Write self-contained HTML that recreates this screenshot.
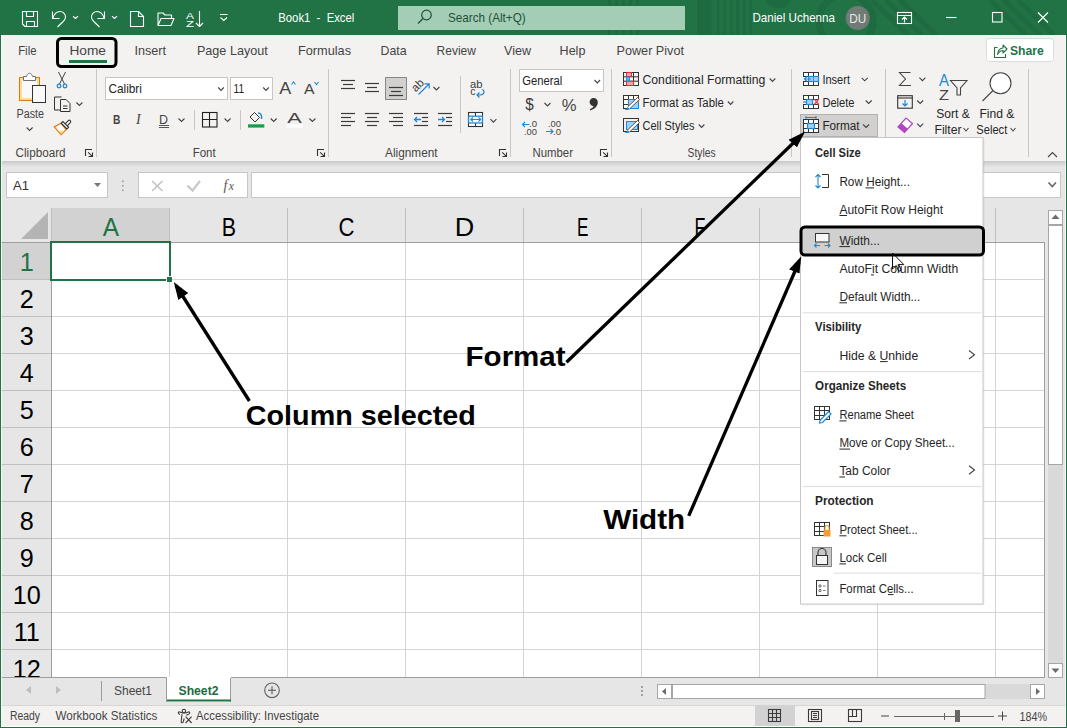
<!DOCTYPE html>
<html><head><meta charset="utf-8"><style>
html,body{margin:0;padding:0;width:1067px;height:728px;overflow:hidden;background:#f3f2f1}
svg{display:block;font-family:"Liberation Sans", sans-serif}
</style></head><body>
<svg width="1067" height="728" viewBox="0 0 1067 728">
<rect x="0" y="0" width="1067" height="728" fill="#f3f2f1"/>
<rect x="0" y="0" width="1067" height="35" fill="#217346"/>
<rect x="0" y="161" width="1067" height="47" fill="#e6e6e6"/>
<defs><linearGradient id="sh" x1="0" y1="0" x2="0" y2="1"><stop offset="0" stop-color="#c9c9c9"/><stop offset="1" stop-color="#e6e6e6"/></linearGradient></defs>
<rect x="0" y="161" width="1067" height="6" fill="url(#sh)"/>
<rect x="0" y="208" width="1067" height="469" fill="#e6e6e6"/>
<rect x="52" y="243" width="992" height="434" fill="#ffffff"/>
<rect x="169" y="208" width="1" height="34" fill="#bfbfbf"/>
<rect x="169" y="243" width="1" height="434" fill="#d4d4d4"/>
<rect x="287" y="208" width="1" height="34" fill="#bfbfbf"/>
<rect x="287" y="243" width="1" height="434" fill="#d4d4d4"/>
<rect x="405" y="208" width="1" height="34" fill="#bfbfbf"/>
<rect x="405" y="243" width="1" height="434" fill="#d4d4d4"/>
<rect x="523" y="208" width="1" height="34" fill="#bfbfbf"/>
<rect x="523" y="243" width="1" height="434" fill="#d4d4d4"/>
<rect x="641" y="208" width="1" height="34" fill="#bfbfbf"/>
<rect x="641" y="243" width="1" height="434" fill="#d4d4d4"/>
<rect x="759" y="208" width="1" height="34" fill="#bfbfbf"/>
<rect x="759" y="243" width="1" height="434" fill="#d4d4d4"/>
<rect x="877" y="208" width="1" height="34" fill="#bfbfbf"/>
<rect x="877" y="243" width="1" height="434" fill="#d4d4d4"/>
<rect x="995" y="208" width="1" height="34" fill="#bfbfbf"/>
<rect x="995" y="243" width="1" height="434" fill="#d4d4d4"/>
<rect x="0" y="279" width="51" height="1" fill="#bfbfbf"/>
<rect x="52" y="279" width="992" height="1" fill="#d4d4d4"/>
<rect x="0" y="316" width="51" height="1" fill="#bfbfbf"/>
<rect x="52" y="316" width="992" height="1" fill="#d4d4d4"/>
<rect x="0" y="353" width="51" height="1" fill="#bfbfbf"/>
<rect x="52" y="353" width="992" height="1" fill="#d4d4d4"/>
<rect x="0" y="390" width="51" height="1" fill="#bfbfbf"/>
<rect x="52" y="390" width="992" height="1" fill="#d4d4d4"/>
<rect x="0" y="427" width="51" height="1" fill="#bfbfbf"/>
<rect x="52" y="427" width="992" height="1" fill="#d4d4d4"/>
<rect x="0" y="464" width="51" height="1" fill="#bfbfbf"/>
<rect x="52" y="464" width="992" height="1" fill="#d4d4d4"/>
<rect x="0" y="501" width="51" height="1" fill="#bfbfbf"/>
<rect x="52" y="501" width="992" height="1" fill="#d4d4d4"/>
<rect x="0" y="538" width="51" height="1" fill="#bfbfbf"/>
<rect x="52" y="538" width="992" height="1" fill="#d4d4d4"/>
<rect x="0" y="575" width="51" height="1" fill="#bfbfbf"/>
<rect x="52" y="575" width="992" height="1" fill="#d4d4d4"/>
<rect x="0" y="612" width="51" height="1" fill="#bfbfbf"/>
<rect x="52" y="612" width="992" height="1" fill="#d4d4d4"/>
<rect x="0" y="649" width="51" height="1" fill="#bfbfbf"/>
<rect x="52" y="649" width="992" height="1" fill="#d4d4d4"/>
<rect x="52" y="208" width="117" height="34" fill="#d2d2d2"/>
<rect x="1" y="243" width="50" height="36" fill="#d2d2d2"/>
<rect x="0" y="242" width="1044" height="1" fill="#9e9e9e"/>
<rect x="51" y="208" width="1" height="34" fill="#c0c0c0"/>
<rect x="51" y="243" width="1" height="434" fill="#9e9e9e"/>
<rect x="1044" y="242" width="1" height="435" fill="#9e9e9e"/>
<polygon points="48,212 48,239 21,239" fill="#b4b4b4"/>
<text x="111" y="236.2" font-size="25.6" fill="#217346" font-weight="normal" text-anchor="middle" textLength="16.3" lengthAdjust="spacingAndGlyphs" >A</text>
<text x="229" y="236.2" font-size="25.6" fill="#000" font-weight="normal" text-anchor="middle" textLength="14.3" lengthAdjust="spacingAndGlyphs" >B</text>
<text x="346.5" y="236.2" font-size="25.6" fill="#000" font-weight="normal" text-anchor="middle" textLength="16" lengthAdjust="spacingAndGlyphs" >C</text>
<text x="464.5" y="236.2" font-size="25.6" fill="#000" font-weight="normal" text-anchor="middle" textLength="19.5" lengthAdjust="spacingAndGlyphs" >D</text>
<text x="582.6" y="236.2" font-size="25.6" fill="#000" font-weight="normal" text-anchor="middle" textLength="11.4" lengthAdjust="spacingAndGlyphs" >E</text>
<text x="700" y="236.2" font-size="25.6" fill="#000" font-weight="normal" text-anchor="middle" textLength="10.9" lengthAdjust="spacingAndGlyphs" >F</text>
<text x="818" y="236.2" font-size="25.6" fill="#000" font-weight="normal" text-anchor="middle" textLength="17" lengthAdjust="spacingAndGlyphs" >G</text>
<text x="936" y="236.2" font-size="25.6" fill="#000" font-weight="normal" text-anchor="middle" textLength="17" lengthAdjust="spacingAndGlyphs" >H</text>
<text x="26.8" y="271.3" font-size="25.2" fill="#217346" font-weight="normal" text-anchor="middle" >1</text>
<text x="26.8" y="308.3" font-size="25.2" fill="#000" font-weight="normal" text-anchor="middle" >2</text>
<text x="26.8" y="345.3" font-size="25.2" fill="#000" font-weight="normal" text-anchor="middle" >3</text>
<text x="26.8" y="382.3" font-size="25.2" fill="#000" font-weight="normal" text-anchor="middle" >4</text>
<text x="26.8" y="419.3" font-size="25.2" fill="#000" font-weight="normal" text-anchor="middle" >5</text>
<text x="26.8" y="456.3" font-size="25.2" fill="#000" font-weight="normal" text-anchor="middle" >6</text>
<text x="26.8" y="493.3" font-size="25.2" fill="#000" font-weight="normal" text-anchor="middle" >7</text>
<text x="26.8" y="530.3" font-size="25.2" fill="#000" font-weight="normal" text-anchor="middle" >8</text>
<text x="26.8" y="567.3" font-size="25.2" fill="#000" font-weight="normal" text-anchor="middle" >9</text>
<text x="26.8" y="604.3" font-size="25.2" fill="#000" font-weight="normal" text-anchor="middle" >10</text>
<text x="26.8" y="641.3" font-size="25.2" fill="#000" font-weight="normal" text-anchor="middle" >11</text>
<text x="26.8" y="678.3" font-size="25.2" fill="#000" font-weight="normal" text-anchor="middle" >12</text>
<path d="M51,276 V242 H170 V276 M166,280 H51 V276" fill="none" stroke="#217346" stroke-width="2"/>
<rect x="167" y="277" width="5" height="5" fill="#217346"/>
<rect x="0" y="677" width="1067" height="28" fill="#e6e6e6"/>
<rect x="0" y="677" width="1045" height="1" fill="#9e9e9e"/>
<rect x="0" y="705" width="1067" height="23" fill="#f3f2f1"/>
<line x1="0" y1="705.5" x2="1067" y2="705.5" stroke="#d6d6d6"/>
<polygon points="26,690 31,686 31,694" fill="#bdbdbd"/>
<polygon points="61,690 56,686 56,694" fill="#bdbdbd"/>
<line x1="101.5" y1="681" x2="101.5" y2="701" stroke="#9b9b9b"/>
<text x="114" y="694.8" font-size="13" fill="#444" font-weight="normal" text-anchor="start" textLength="38" lengthAdjust="spacingAndGlyphs" >Sheet1</text>
<rect x="167" y="677" width="64" height="25" fill="#fff"/>
<line x1="166.5" y1="678" x2="166.5" y2="702" stroke="#9b9b9b"/>
<line x1="230.5" y1="678" x2="230.5" y2="702" stroke="#9b9b9b"/>
<rect x="167" y="699.5" width="64" height="2" fill="#217346"/>
<text x="178.5" y="694.8" font-size="13" fill="#1d6b40" font-weight="bold" text-anchor="start" textLength="40" lengthAdjust="spacingAndGlyphs" >Sheet2</text>
<circle cx="272" cy="690.3" r="7.3" fill="none" stroke="#666" stroke-width="1.2"/>
<line x1="268" y1="690.3" x2="276" y2="690.3" stroke="#666" stroke-width="1.2"/>
<line x1="272" y1="686.3" x2="272" y2="694.3" stroke="#666" stroke-width="1.2"/>
<rect x="641" y="686" width="2" height="2" fill="#a0a0a0"/>
<rect x="641" y="690" width="2" height="2" fill="#a0a0a0"/>
<rect x="641" y="694" width="2" height="2" fill="#a0a0a0"/>
<rect x="657" y="684" width="388" height="15" fill="#d9d9d9"/>
<rect x="657.5" y="684.5" width="14" height="14" fill="#fff" stroke="#a6a6a6"/>
<rect x="672" y="684" width="1" height="15" fill="#b0b0b0"/>
<rect x="672.5" y="684.5" width="312.5" height="14" fill="#fff" stroke="#a6a6a6"/>
<rect x="1030.5" y="684.5" width="14" height="14" fill="#fff" stroke="#a6a6a6"/>
<polygon points="662,691.5 666,688 666,695" fill="#6b6b6b"/>
<polygon points="1040,691.5 1036,688 1036,695" fill="#6b6b6b"/>
<rect x="1045" y="208" width="21" height="469" fill="#e6e6e6"/>
<rect x="1048" y="225" width="15" height="438" fill="#d9d9d9"/>
<rect x="1048.5" y="210.5" width="14" height="14" fill="#fff" stroke="#a6a6a6"/>
<rect x="1048.5" y="225.5" width="14" height="239" fill="#fff" stroke="#a6a6a6"/>
<rect x="1048.5" y="663.5" width="14" height="14" fill="#fff" stroke="#a6a6a6"/>
<polygon points="1055.5,214.5 1051.5,219 1059.5,219" fill="#6b6b6b"/>
<polygon points="1055.5,673 1051.5,668.5 1059.5,668.5" fill="#6b6b6b"/>
<text x="10" y="720" font-size="12" fill="#444" font-weight="normal" text-anchor="start" textLength="30" lengthAdjust="spacingAndGlyphs" >Ready</text>
<text x="55.4" y="720" font-size="12" fill="#444" font-weight="normal" text-anchor="start" textLength="102" lengthAdjust="spacingAndGlyphs" >Workbook Statistics</text>
<text x="196" y="720" font-size="12" fill="#444" font-weight="normal" text-anchor="start" textLength="123" lengthAdjust="spacingAndGlyphs" >Accessibility: Investigate</text>
<g stroke="#3b3b3b" stroke-width="1.1" fill="none" stroke-linejoin="round"><circle cx="183.9" cy="711" r="1.7"/><path d="M180,714.5 C177.5,713.5 178,711.5 179.8,712 L182.5,713 H185.5 L188.3,712 C190,711.5 190.5,713.5 188,714.5 L186.3,715.3 M182,714.3 L181.2,721.3 C181,723 183.2,723.2 183.4,721.5 L184.2,718.5"/><path d="M185.6,716.6 L191.6,723 M191.6,716.6 L185.6,723"/></g>
<rect x="755" y="705" width="40" height="21" fill="#d2d2d2"/>
<g stroke="#3b3b3b" stroke-width="1.1" fill="none"><rect x="768.5" y="709.5" width="12" height="12"/><path d="M772.5,709.5 V721.5 M776.5,709.5 V721.5 M768.5,713.5 H780.5 M768.5,717.5 H780.5"/></g>
<g stroke="#3b3b3b" stroke-width="1.1" fill="none"><rect x="808.5" y="709.5" width="13" height="12"/><rect x="811.5" y="711.5" width="7" height="8"/><path d="M813,713.5 H817 M813,715.5 H817 M813,717.5 H817"/></g>
<g stroke="#3b3b3b" stroke-width="1.1" fill="none"><rect x="848.5" y="709.5" width="13" height="12"/><path d="M852.5,709.5 V716.5 H848.5 M856.5,709.5 V716.5 H852.5"/></g>
<line x1="881" y1="716" x2="889" y2="716" stroke="#444"/>
<line x1="894" y1="716.5" x2="994" y2="716.5" stroke="#666"/>
<line x1="944.5" y1="713" x2="944.5" y2="720" stroke="#666"/>
<rect x="955" y="710" width="5" height="12" fill="#666"/>
<line x1="998" y1="716" x2="1007" y2="716" stroke="#444"/><line x1="1002.5" y1="711.5" x2="1002.5" y2="720.5" stroke="#444"/>
<text x="1019.4" y="720.5" font-size="12" fill="#444" font-weight="normal" text-anchor="start" textLength="27.6" lengthAdjust="spacingAndGlyphs" >184%</text>
<g stroke="#fff" stroke-width="1.1" fill="none" stroke-linejoin="round">
<path d="M22.5,11.5 H37.5 V26.5 H25 L22.5,24 Z"/>
<path d="M26.5,11.5 V16.5 H33.5 V11.5"/>
<path d="M26.5,26.5 V21.5 H34.5 V26.5"/>
<path d="M52.5,11.5 V18.5 H59.5"/>
<path d="M52.8,18.3 C54.5,13 58,11.5 60,11.5 C63,11.5 65.5,14 65.5,17 C65.5,19.5 64,21 57.5,27"/>
<path d="M73,16.2 L75.5,18.5 L78,16.2"/>
<path d="M104.5,11.5 V18.5 H97.5"/>
<path d="M104.2,18.3 C102.5,13 99,11.5 97,11.5 C94,11.5 91.5,14 91.5,17 C91.5,19.5 93,21 99.5,27"/>
<path d="M112,16.2 L114.5,18.5 L117,16.2"/>
<path d="M130.5,11.5 H138.5 L143.5,16.5 V26.5 H130.5 Z M138.5,11.5 V16.5 H143.5"/>
<path d="M158,25.5 V13 H163 L165,15 H171.5 V18 M158,25.5 L161,18.5 H174 L171,25.5 Z"/>
<path d="M199.5,11 V26.5 M196,23 L199.5,26.5 L203,23"/>
</g>
<text x="186" y="18.5" font-size="9" fill="#fff" font-weight="normal" text-anchor="start" textLength="8" lengthAdjust="spacingAndGlyphs" >A</text>
<text x="186" y="27" font-size="9" fill="#fff" font-weight="normal" text-anchor="start" textLength="8" lengthAdjust="spacingAndGlyphs" >Z</text>
<g stroke="#fff" stroke-width="1.1" fill="none"><path d="M220,14.5 H227.5 M220.5,17.5 L223.8,20.5 L227,17.5"/></g>
<text x="278.3" y="22.3" font-size="13" fill="#fff" font-weight="normal" text-anchor="start" textLength="76" lengthAdjust="spacingAndGlyphs" >Book1&#160;&#160;-&#160;&#160;Excel</text>
<defs><clipPath id="tb"><rect x="0" y="0" width="1067" height="35"/></clipPath></defs>
<g clip-path="url(#tb)" fill="#1f6b41">
<rect x="608" y="0" width="3" height="35"/>
<rect x="615" y="0" width="3" height="35"/>
<rect x="622" y="0" width="3" height="35"/>
<rect x="629" y="0" width="3" height="35"/>
<rect x="636" y="0" width="3" height="35"/>
<rect x="697" y="0" width="14.5" height="35"/>
<rect x="717" y="0" width="2.5" height="35"/>
<rect x="723.5" y="0" width="2.5" height="35"/>
<rect x="730" y="0" width="2.5" height="35"/>
<rect x="736.5" y="0" width="2.5" height="35"/>
<rect x="743" y="0" width="2.5" height="35"/>
<rect x="749.5" y="0" width="2.5" height="35"/>
<circle cx="778.5" cy="-6" r="14"/>
<circle cx="846" cy="21" r="27" fill="none" stroke="#1f6b41" stroke-width="7"/>
<path d="M872,0 L908,35 M886,0 L922,35 M900,0 L936,35 M990,0 L1026,35 M1004,0 L1040,35 M1018,0 L1054,35" stroke="#1f6b41" stroke-width="5" fill="none"/>
</g>
<rect x="398" y="6" width="287" height="24" fill="#a3cdb5"/>
<g stroke="#1e5136" stroke-width="1.2" fill="none"><circle cx="426.5" cy="15" r="4.8"/><line x1="423" y1="18.5" x2="418" y2="23.5"/></g>
<text x="448" y="22.3" font-size="13" fill="#1e5136" font-weight="normal" text-anchor="start" textLength="77.7" lengthAdjust="spacingAndGlyphs" >Search (Alt+Q)</text>
<text x="752.5" y="22.3" font-size="13" fill="#fff" font-weight="normal" text-anchor="start" textLength="82.4" lengthAdjust="spacingAndGlyphs" >Daniel Uchenna</text>
<circle cx="857.7" cy="18" r="12" fill="#6f7b74"/>
<text x="857.7" y="22.5" font-size="12" fill="#e8e8e8" font-weight="normal" text-anchor="middle" textLength="17" lengthAdjust="spacingAndGlyphs" >DU</text>
<g stroke="#fff" stroke-width="1.1" fill="none"><rect x="897.5" y="12.5" width="14" height="11"/><path d="M897.5,15.5 H911.5 M904.5,22.5 V17 M902,19.5 L904.5,17 L907,19.5"/></g>
<line x1="946" y1="17.5" x2="956.5" y2="17.5" stroke="#fff" stroke-width="1.1"/>
<rect x="992.5" y="12.5" width="9.5" height="9.5" fill="none" stroke="#fff" stroke-width="1.1"/>
<path d="M1038,12.5 L1048,22.5 M1048,12.5 L1038,22.5" stroke="#fff" stroke-width="1.1"/>
<text x="18.2" y="55" font-size="13" fill="#444444" font-weight="normal" text-anchor="start" textLength="18.3" lengthAdjust="spacingAndGlyphs" >File</text>
<text x="69.4" y="55" font-size="13" fill="#444444" font-weight="normal" text-anchor="start" textLength="36.6" lengthAdjust="spacingAndGlyphs" >Home</text>
<rect x="69" y="60" width="38" height="3" fill="#217346"/>
<text x="134.4" y="55" font-size="13" fill="#444444" font-weight="normal" text-anchor="start" textLength="31.5" lengthAdjust="spacingAndGlyphs" >Insert</text>
<text x="196.9" y="55" font-size="13" fill="#444444" font-weight="normal" text-anchor="start" textLength="70.9" lengthAdjust="spacingAndGlyphs" >Page Layout</text>
<text x="298" y="55" font-size="13" fill="#444444" font-weight="normal" text-anchor="start" textLength="53" lengthAdjust="spacingAndGlyphs" >Formulas</text>
<text x="380.5" y="55" font-size="13" fill="#444444" font-weight="normal" text-anchor="start" textLength="26.1" lengthAdjust="spacingAndGlyphs" >Data</text>
<text x="436.6" y="55" font-size="13" fill="#444444" font-weight="normal" text-anchor="start" textLength="39.3" lengthAdjust="spacingAndGlyphs" >Review</text>
<text x="504" y="55" font-size="13" fill="#444444" font-weight="normal" text-anchor="start" textLength="27" lengthAdjust="spacingAndGlyphs" >View</text>
<text x="559.6" y="55" font-size="13" fill="#444444" font-weight="normal" text-anchor="start" textLength="25.8" lengthAdjust="spacingAndGlyphs" >Help</text>
<text x="616.5" y="55" font-size="13" fill="#444444" font-weight="normal" text-anchor="start" textLength="67.5" lengthAdjust="spacingAndGlyphs" >Power Pivot</text>
<rect x="57.5" y="38.5" width="58.5" height="28" rx="4" fill="none" stroke="#000" stroke-width="3"/>
<rect x="986.5" y="38.5" width="67" height="23" rx="3" fill="#fff" stroke="#dcdcdc"/>
<g stroke="#217346" stroke-width="1.1" fill="none" stroke-linejoin="round"><path d="M997.5,47.5 H994.5 V57.5 H1005.5 V54"/><path d="M997.5,54.5 C998,50 1000.5,48 1003,48 V45 L1007,49 L1003,53 V50.5 C1001,50.5 999,51.5 997.5,54.5 Z"/></g>
<text x="1010" y="54.8" font-size="13" fill="#217346" font-weight="bold" text-anchor="start" textLength="33.8" lengthAdjust="spacingAndGlyphs" >Share</text>
<line x1="96.5" y1="69" x2="96.5" y2="157" stroke="#c8c6c4"/>
<line x1="328.5" y1="69" x2="328.5" y2="157" stroke="#c8c6c4"/>
<line x1="510.5" y1="69" x2="510.5" y2="157" stroke="#c8c6c4"/>
<line x1="611.5" y1="69" x2="611.5" y2="157" stroke="#c8c6c4"/>
<line x1="791.5" y1="69" x2="791.5" y2="157" stroke="#c8c6c4"/>
<line x1="885.5" y1="69" x2="885.5" y2="157" stroke="#c8c6c4"/>
<line x1="1028.5" y1="69" x2="1028.5" y2="157" stroke="#c8c6c4"/>
<text x="15.6" y="156.8" font-size="12" fill="#444444" font-weight="normal" text-anchor="start" textLength="50" lengthAdjust="spacingAndGlyphs" >Clipboard</text>
<text x="192.7" y="156.8" font-size="12" fill="#444444" font-weight="normal" text-anchor="start" textLength="23" lengthAdjust="spacingAndGlyphs" >Font</text>
<text x="385.1" y="156.8" font-size="12" fill="#444444" font-weight="normal" text-anchor="start" textLength="52.5" lengthAdjust="spacingAndGlyphs" >Alignment</text>
<text x="532.5" y="156.8" font-size="12" fill="#444444" font-weight="normal" text-anchor="start" textLength="40.5" lengthAdjust="spacingAndGlyphs" >Number</text>
<text x="687.6" y="156.8" font-size="12" fill="#444444" font-weight="normal" text-anchor="start" textLength="28" lengthAdjust="spacingAndGlyphs" >Styles</text>
<g stroke="#333" stroke-width="1.1" fill="none"><path d="M85.5,156 V149.5 H92"/><path d="M88.2,152.4 L92.3,156.3 M88.5,156.5 H92.5 V152.5"/></g>
<g stroke="#333" stroke-width="1.1" fill="none"><path d="M317.5,156 V149.5 H324"/><path d="M320.2,152.4 L324.3,156.3 M320.5,156.5 H324.5 V152.5"/></g>
<g stroke="#333" stroke-width="1.1" fill="none"><path d="M499.5,156 V149.5 H506"/><path d="M502.2,152.4 L506.3,156.3 M502.5,156.5 H506.5 V152.5"/></g>
<g stroke="#333" stroke-width="1.1" fill="none"><path d="M600.5,156 V149.5 H607"/><path d="M603.2,152.4 L607.3,156.3 M603.5,156.5 H607.5 V152.5"/></g>
<path d="M1048,157 L1052.5,152.5 L1057,157" stroke="#444" stroke-width="1.1" fill="none"/>
<rect x="19.5" y="77.5" width="20" height="23" fill="#fbd98a" stroke="#e07a10" stroke-width="1"/>
<rect x="21.8" y="79.8" width="15.4" height="18.4" fill="#f9f9f9"/>
<path d="M23.5,80.5 H35.5 V76.5 H32.5 C32,75 31.3,73.3 29.5,73.3 C27.7,73.3 27,75 26.5,76.5 H23.5 Z" fill="#fff" stroke="#6e6e6e" stroke-width="1"/>
<rect x="32.5" y="85.5" width="13" height="17" fill="#f9f9f9" stroke="#333" stroke-width="1"/>
<text x="16.5" y="117.9" font-size="12" fill="#444444" font-weight="normal" text-anchor="start" textLength="27.5" lengthAdjust="spacingAndGlyphs" >Paste</text>
<path d="M26.6,127.5 L29.6,130.5 L32.6,127.5" stroke="#444" stroke-width="1.1" fill="none"/>
<g stroke="#444" stroke-width="1" fill="none"><path d="M58.5,72 L64.5,84 M65.5,72 L59.5,84"/></g>
<g stroke="#1e88d6" stroke-width="1.3" fill="none"><circle cx="59" cy="86" r="1.8"/><circle cx="65" cy="86" r="1.8"/></g>
<g stroke="#333" stroke-width="1" fill="none"><path d="M61.5,97 H54.5 V110 H60"/><path d="M60.5,99.5 H66 L70,103.5 V111.5 H60.5 Z"/><path d="M63,106 H67.5 M63,108.5 H67.5"/></g>
<path d="M76.4,102.5 L79.4,105.5 L82.4,102.5" stroke="#444" stroke-width="1.1" fill="none"/>
<g stroke-width="1.2"><path d="M54.3,126.9 L61,123.3 L66.3,129.5 L61.1,134.7 Z" fill="#fff" stroke="#e07a1b"/><path d="M57.5,130.2 L64.3,131.3 L61.2,133.8 Z" fill="#fbd77a"/><path d="M64.5,124.6 L68.3,120.6 A1.4,1.4 0 0 1 70.3,122.6 L66.5,126.6" fill="#fff" stroke="#333" stroke-width="1.1"/><path d="M61.2,123.2 L62.9,121.5 L68.6,127.3 L66.9,129 Z" fill="#fff" stroke="#333" stroke-width="1.1"/></g>
<rect x="105.5" y="77.5" width="122" height="22" fill="#fff" stroke="#c8c6c4"/>
<text x="108.4" y="93.2" font-size="13" fill="#222" font-weight="normal" text-anchor="start" textLength="33.5" lengthAdjust="spacingAndGlyphs" >Calibri</text>
<path d="M218.2,87.5 L221,90.5 L223.8,87.5" stroke="#444" stroke-width="1.1" fill="none"/>
<rect x="230.5" y="77.5" width="42" height="22" fill="#fff" stroke="#c8c6c4"/>
<text x="233.6" y="93.2" font-size="13" fill="#222" font-weight="normal" text-anchor="start" textLength="10.5" lengthAdjust="spacingAndGlyphs" >11</text>
<path d="M263.2,87.5 L266,90.5 L268.8,87.5" stroke="#444" stroke-width="1.1" fill="none"/>
<text x="279.3" y="93.8" font-size="16.5" fill="#444" font-weight="normal" text-anchor="start" textLength="12" lengthAdjust="spacingAndGlyphs" >A</text>
<path d="M291.5,84.5 L293.5,82 L295.5,84.5" stroke="#1e88d6" stroke-width="1.1" fill="none"/>
<text x="304" y="94" font-size="14" fill="#444" font-weight="normal" text-anchor="start" textLength="10.5" lengthAdjust="spacingAndGlyphs" >A</text>
<path d="M314.5,82 L316.5,84.5 L318.5,82" stroke="#1e88d6" stroke-width="1.1" fill="none"/>
<text x="112.9" y="123.6" font-size="13" fill="#444" font-weight="bold" text-anchor="start" textLength="7.4" lengthAdjust="spacingAndGlyphs" >B</text>
<text x="136" y="123.6" font-size="14" fill="#444" font-weight="normal" text-anchor="start" font-style="italic" font-family="Liberation Serif">I</text>
<text x="159" y="123.6" font-size="13" fill="#444" font-weight="normal" text-anchor="start" textLength="9" lengthAdjust="spacingAndGlyphs" >D</text>
<path d="M159,125.5 H169 M159,127.5 H169" stroke="#444" stroke-width="0.9"/>
<path d="M178.5,118.5 L181.5,121.5 L184.5,118.5" stroke="#444" stroke-width="1.1" fill="none"/>
<line x1="194.5" y1="110" x2="194.5" y2="130" stroke="#c8c6c4"/>
<g stroke="#222" stroke-width="1.1" fill="none"><rect x="202.5" y="112.5" width="14.5" height="14.5"/><path d="M209.5,112.5 V127 M202.5,119.5 H217"/></g>
<path d="M224.6,118.5 L227.6,121.5 L230.6,118.5" stroke="#444" stroke-width="1.1" fill="none"/>
<line x1="240.5" y1="110" x2="240.5" y2="130" stroke="#c8c6c4"/>
<g stroke="#333" stroke-width="1" fill="none"><path d="M250,117 L254.5,112.5 L259.5,117.5 L255,122 Z"/></g>
<path d="M258,113 C261,113 262,116 261.5,119" stroke="#1e88d6" stroke-width="1.4" fill="none"/>
<rect x="248" y="124.3" width="16.3" height="3.3" fill="#13a04a"/>
<path d="M270.7,118.5 L273.7,121.5 L276.7,118.5" stroke="#444" stroke-width="1.1" fill="none"/>
<text x="287.2" y="123" font-size="15" fill="#444" font-weight="normal" text-anchor="start" textLength="14.5" lengthAdjust="spacingAndGlyphs" >A</text>
<rect x="286.7" y="124.3" width="16.3" height="3.3" fill="#fff"/>
<path d="M309.4,118.5 L312.4,121.5 L315.4,118.5" stroke="#444" stroke-width="1.1" fill="none"/>
<line x1="341" y1="80.5" x2="355" y2="80.5" stroke="#3b3b3b" stroke-width="1.2"/>
<line x1="343" y1="84.5" x2="353" y2="84.5" stroke="#3b3b3b" stroke-width="1.2"/>
<line x1="341" y1="88.5" x2="355" y2="88.5" stroke="#3b3b3b" stroke-width="1.2"/>
<line x1="365" y1="83.5" x2="379" y2="83.5" stroke="#3b3b3b" stroke-width="1.2"/>
<line x1="367" y1="87.5" x2="377" y2="87.5" stroke="#3b3b3b" stroke-width="1.2"/>
<line x1="365" y1="91.5" x2="379" y2="91.5" stroke="#3b3b3b" stroke-width="1.2"/>
<rect x="385.5" y="77.5" width="21" height="22" fill="#d2d0ce" stroke="#8a8886"/>
<line x1="389" y1="87.5" x2="403" y2="87.5" stroke="#3b3b3b" stroke-width="1.2"/>
<line x1="391" y1="91.5" x2="401" y2="91.5" stroke="#3b3b3b" stroke-width="1.2"/>
<line x1="389" y1="95.5" x2="403" y2="95.5" stroke="#3b3b3b" stroke-width="1.2"/>
<text x="410.5" y="90" font-size="11.5" fill="#3b3b3b" font-weight="normal" text-anchor="start" transform="rotate(-45 416 85)">ab</text>
<path d="M418.5,94.5 L429,84 M424.5,83.8 H429.2 V88.5" stroke="#1e88d6" stroke-width="1.2" fill="none"/>
<path d="M433.4,87.0 L436.4,90.0 L439.4,87.0" stroke="#444" stroke-width="1.1" fill="none"/>
<line x1="460.5" y1="76" x2="460.5" y2="133" stroke="#c8c6c4"/>
<text x="470" y="87.8" font-size="10.5" fill="#3b3b3b" font-weight="normal" text-anchor="start" textLength="12.5" lengthAdjust="spacingAndGlyphs" >ab</text>
<text x="470.2" y="95.2" font-size="10.5" fill="#3b3b3b" font-weight="normal" text-anchor="start" >c</text>
<path d="M482,89.5 C485,90 485,95 480,95 H477 M479.5,92.5 L477,95 L479.5,97.5" stroke="#1e88d6" stroke-width="1.2" fill="none"/>
<line x1="341" y1="113.5" x2="355" y2="113.5" stroke="#3b3b3b" stroke-width="1.2"/>
<line x1="341" y1="117.5" x2="351" y2="117.5" stroke="#3b3b3b" stroke-width="1.2"/>
<line x1="341" y1="121.5" x2="355" y2="121.5" stroke="#3b3b3b" stroke-width="1.2"/>
<line x1="341" y1="125.5" x2="351" y2="125.5" stroke="#3b3b3b" stroke-width="1.2"/>
<line x1="365" y1="113.5" x2="379" y2="113.5" stroke="#3b3b3b" stroke-width="1.2"/>
<line x1="367" y1="117.5" x2="377" y2="117.5" stroke="#3b3b3b" stroke-width="1.2"/>
<line x1="365" y1="121.5" x2="379" y2="121.5" stroke="#3b3b3b" stroke-width="1.2"/>
<line x1="367" y1="125.5" x2="377" y2="125.5" stroke="#3b3b3b" stroke-width="1.2"/>
<line x1="389" y1="113.5" x2="403" y2="113.5" stroke="#3b3b3b" stroke-width="1.2"/>
<line x1="393" y1="117.5" x2="403" y2="117.5" stroke="#3b3b3b" stroke-width="1.2"/>
<line x1="389" y1="121.5" x2="403" y2="121.5" stroke="#3b3b3b" stroke-width="1.2"/>
<line x1="393" y1="125.5" x2="403" y2="125.5" stroke="#3b3b3b" stroke-width="1.2"/>
<line x1="414" y1="113.5" x2="428" y2="113.5" stroke="#3b3b3b" stroke-width="1.2"/>
<line x1="422" y1="117.5" x2="428" y2="117.5" stroke="#3b3b3b" stroke-width="1.2"/>
<line x1="422" y1="121.5" x2="428" y2="121.5" stroke="#3b3b3b" stroke-width="1.2"/>
<line x1="414" y1="125.5" x2="428" y2="125.5" stroke="#3b3b3b" stroke-width="1.2"/>
<path d="M421,119.5 H414.5 M417,117 L414.5,119.5 L417,122" stroke="#1e88d6" stroke-width="1.3" fill="none"/>
<line x1="438" y1="113.5" x2="452" y2="113.5" stroke="#3b3b3b" stroke-width="1.2"/>
<line x1="446" y1="117.5" x2="452" y2="117.5" stroke="#3b3b3b" stroke-width="1.2"/>
<line x1="446" y1="121.5" x2="452" y2="121.5" stroke="#3b3b3b" stroke-width="1.2"/>
<line x1="438" y1="125.5" x2="452" y2="125.5" stroke="#3b3b3b" stroke-width="1.2"/>
<path d="M438,119.5 H444.5 M442,117 L444.5,119.5 L442,122" stroke="#1e88d6" stroke-width="1.3" fill="none"/>
<g stroke="#333" stroke-width="1.1" fill="#fff"><rect x="468.5" y="112.5" width="14" height="14"/><path d="M475.5,112.5 V116 M475.5,123 V126.5"/></g>
<rect x="468.6" y="116.2" width="13.8" height="6.8" fill="#fff" stroke="#1e88d6" stroke-width="1.3"/>
<path d="M470.8,119.5 H480.7 M473,117.3 L470.8,119.5 L473,121.7 M478.5,117.3 L480.7,119.5 L478.5,121.7" stroke="#1e88d6" stroke-width="1.2" fill="none"/>
<path d="M490.4,119.1 L493.4,122.1 L496.4,119.1" stroke="#444" stroke-width="1.1" fill="none"/>
<rect x="519.5" y="69.5" width="84" height="22" fill="#fff" stroke="#c8c6c4"/>
<text x="522.3" y="85.1" font-size="12.5" fill="#222" font-weight="normal" text-anchor="start" textLength="40" lengthAdjust="spacingAndGlyphs" >General</text>
<path d="M594.5,80.0 L597.3,83.0 L600.0999999999999,80.0" stroke="#444" stroke-width="1.1" fill="none"/>
<text x="525.2" y="109.8" font-size="17" fill="#3b3b3b" font-weight="normal" text-anchor="start" textLength="8.5" lengthAdjust="spacingAndGlyphs" >$</text>
<path d="M544.5,103.0 L547.5,106.0 L550.5,103.0" stroke="#444" stroke-width="1.1" fill="none"/>
<text x="561.8" y="110.5" font-size="17" fill="#444" font-weight="normal" text-anchor="start" textLength="14.8" lengthAdjust="spacingAndGlyphs" >%</text>
<path d="M593.5,98 C596,98 597.8,99.8 597.8,102.3 C597.8,106 595,109 590.3,110.5 L589.8,109.3 C592,108.3 593.3,107 593.6,106.2 C591.3,106 589.6,104.4 589.6,102.1 C589.6,99.8 591.3,98 593.5,98 Z" fill="#333"/>
<text x="529" y="127" font-size="9" fill="#444" font-weight="normal" text-anchor="start" textLength="8" lengthAdjust="spacingAndGlyphs" >.0</text>
<text x="524" y="135" font-size="9" fill="#444" font-weight="normal" text-anchor="start" textLength="13" lengthAdjust="spacingAndGlyphs" >.00</text>
<path d="M529.5,124.5 H522.5 M525,122 L522.5,124.5 L525,127" stroke="#1e88d6" stroke-width="1.1" fill="none"/>
<text x="548" y="127" font-size="9" fill="#444" font-weight="normal" text-anchor="start" textLength="13" lengthAdjust="spacingAndGlyphs" >.00</text>
<text x="553" y="135" font-size="9" fill="#444" font-weight="normal" text-anchor="start" textLength="8" lengthAdjust="spacingAndGlyphs" >.0</text>
<path d="M546,131.5 H553 M550.5,129 L553,131.5 L550.5,134" stroke="#1e88d6" stroke-width="1.1" fill="none"/>
<g stroke="#333" stroke-width="1" fill="none"><rect x="623.5" y="72.5" width="15" height="13"/><path d="M628.5,72.5 V85.5 M633.5,72.5 V85.5 M623.5,76.8 H638.5 M623.5,81.2 H638.5"/></g>
<rect x="626.5" y="72.5" width="5" height="4" fill="#f4a3ab" stroke="#e02a36"/><rect x="626.5" y="81.2" width="7" height="4.3" fill="#f4a3ab" stroke="#e02a36"/><rect x="626.5" y="77" width="3" height="4" fill="#5eaef0" stroke="#1e88d6" stroke-width="0.8"/>
<text x="642.5" y="83.6" font-size="12.5" fill="#262626" font-weight="normal" text-anchor="start" textLength="122.9" lengthAdjust="spacingAndGlyphs" >Conditional Formatting</text>
<path d="M769.7,78.5 L772.5,81.5 L775.3,78.5" stroke="#444" stroke-width="1.1" fill="none"/>
<g stroke="#333" stroke-width="1" fill="none"><rect x="623.5" y="95.5" width="15" height="13" fill="#fff"/><line x1="628.5" y1="95" x2="628.5" y2="109"/><line x1="633.5" y1="95" x2="633.5" y2="109"/><line x1="623" y1="99.5" x2="639" y2="99.5"/><line x1="623" y1="104.5" x2="639" y2="104.5"/></g>
<rect x="628.5" y="99.5" width="10" height="9" fill="#9fd0f5" stroke="#1e88d6"/><path d="M627.5,107 L637.5,97.5 L639.5,99.5 L629.5,109" stroke="#444" stroke-width="0.9" fill="#fff"/><path d="M624.5,109.5 C626,109.5 627,108.5 627.5,107 L629.5,109 C628.5,110 626.5,110.5 624.5,109.5 Z" fill="#1e88d6"/>
<text x="642.5" y="106.8" font-size="12.5" fill="#262626" font-weight="normal" text-anchor="start" textLength="81.4" lengthAdjust="spacingAndGlyphs" >Format as Table</text>
<path d="M727.8000000000001,101.5 L730.6,104.5 L733.4,101.5" stroke="#444" stroke-width="1.1" fill="none"/>
<rect x="623.5" y="118.5" width="15" height="13" fill="none" stroke="#333"/><rect x="626.5" y="121.5" width="11" height="8" fill="#9fd0f5" stroke="#1e88d6"/><path d="M627.5,130 L637.5,120.5 L639.5,122.5 L629.5,132" stroke="#444" stroke-width="0.9" fill="#fff"/><path d="M624.5,132.5 C626,132.5 627,131.5 627.5,130 L629.5,132 C628.5,133 626.5,133.5 624.5,132.5 Z" fill="#1e88d6"/>
<text x="642.5" y="130" font-size="12.5" fill="#262626" font-weight="normal" text-anchor="start" textLength="52" lengthAdjust="spacingAndGlyphs" >Cell Styles</text>
<path d="M698.8000000000001,124.5 L701.6,127.5 L704.4,124.5" stroke="#444" stroke-width="1.1" fill="none"/>
<g stroke="#333" stroke-width="1" fill="none"><rect x="803.5" y="72.5" width="15" height="13" fill="#fff"/><line x1="808.5" y1="72" x2="808.5" y2="86"/><line x1="813.5" y1="72" x2="813.5" y2="86"/><line x1="803" y1="76.5" x2="819" y2="76.5"/><line x1="803" y1="81.5" x2="819" y2="81.5"/></g>
<rect x="802.5" y="77" width="2" height="4" fill="#f3f2f1"/>
<rect x="808.5" y="76.5" width="10" height="5" fill="#9fd0f5" stroke="#1e88d6" stroke-width="1.2"/><path d="M808.5,76.8 V81.2 M813.5,76.8 V81.2" stroke="#1e88d6" stroke-width="0.8"/>
<path d="M811,79 H804.5 M807,76.5 L804.5,79 L807,81.5" stroke="#1e88d6" stroke-width="1.2" fill="none"/>
<text x="822.4" y="83.9" font-size="12.5" fill="#262626" font-weight="normal" text-anchor="start" textLength="27.6" lengthAdjust="spacingAndGlyphs" >Insert</text>
<path d="M861.7,77.8 L864.7,80.8 L867.7,77.8" stroke="#444" stroke-width="1.1" fill="none"/>
<g stroke="#333" stroke-width="1" fill="none"><rect x="803.5" y="95.5" width="15" height="13" fill="#fff"/><line x1="808.5" y1="95" x2="808.5" y2="109"/><line x1="813.5" y1="95" x2="813.5" y2="109"/><line x1="803" y1="99.5" x2="819" y2="99.5"/><line x1="803" y1="104.5" x2="819" y2="104.5"/></g>
<rect x="802.5" y="100" width="2" height="4" fill="#f3f2f1"/><rect x="812" y="100" width="7.5" height="4" fill="#f3f2f1"/>
<rect x="806.5" y="99.5" width="6" height="5" fill="#9fd0f5" stroke="#1e88d6" stroke-width="1.2"/><path d="M803,102 H806" stroke="#1e88d6" stroke-width="1.2"/>
<path d="M814.3,99 L818.8,104.5 M818.8,99 L814.3,104.5" stroke="#e8434c" stroke-width="1.2"/>
<text x="822.4" y="106.8" font-size="12.5" fill="#262626" font-weight="normal" text-anchor="start" textLength="32.1" lengthAdjust="spacingAndGlyphs" >Delete</text>
<path d="M865.7,100.5 L868.7,103.5 L871.7,100.5" stroke="#444" stroke-width="1.1" fill="none"/>
<rect x="800.5" y="114.5" width="77" height="22" fill="#d2d0ce" stroke="#b3b0ad"/>
<g stroke="#333" stroke-width="1" fill="none"><rect x="803.5" y="119.5" width="15" height="13" fill="#fff"/><line x1="808.5" y1="119" x2="808.5" y2="133"/><line x1="813.5" y1="119" x2="813.5" y2="133"/><line x1="803" y1="123.5" x2="819" y2="123.5"/><line x1="803" y1="128.5" x2="819" y2="128.5"/></g>
<rect x="807.5" y="123.5" width="7" height="5" fill="#9fd0f5" stroke="#1e88d6" stroke-width="1.2"/><path d="M806,117.5 H816 M806,116 V119 M816,116 V119" stroke="#1e88d6" stroke-width="1.1" fill="none"/>
<text x="822.4" y="130.2" font-size="12.5" fill="#262626" font-weight="normal" text-anchor="start" textLength="37.2" lengthAdjust="spacingAndGlyphs" >Format</text>
<path d="M863.1,124.5 L866.1,127.5 L869.1,124.5" stroke="#444" stroke-width="1.1" fill="none"/>
<path d="M910.5,72.5 H899.5 L905.5,79 L899.5,85.5 H911" stroke="#444" stroke-width="1.1" fill="none"/>
<path d="M919.4,77.7 L922.4,80.7 L925.4,77.7" stroke="#444" stroke-width="1.1" fill="none"/>
<g stroke="#333" stroke-width="1.1" fill="none"><rect x="897.7" y="95.7" width="14.6" height="12.5"/><path d="M897.7,98 H912.3"/></g>
<path d="M905,100 V106 M902.5,103.5 L905,106 L907.5,103.5" stroke="#1e88d6" stroke-width="1.2" fill="none"/>
<path d="M917.2,100.5 L920.2,103.5 L923.2,100.5" stroke="#444" stroke-width="1.1" fill="none"/>
<path d="M898,127 L906,118 L912.5,123.5 L904.5,132.5 Z" fill="#fff" stroke="#b146c2" stroke-width="1.2"/><path d="M898,127 L901.5,123.3 L908,129 L904.5,132.5 Z" fill="#b146c2"/>
<path d="M917.2,123.7 L920.2,126.7 L923.2,123.7" stroke="#444" stroke-width="1.1" fill="none"/>
<text x="939" y="85.7" font-size="16" fill="#1e88d6" font-weight="normal" text-anchor="start" textLength="10" lengthAdjust="spacingAndGlyphs" >A</text>
<text x="939" y="99.5" font-size="15" fill="#444" font-weight="normal" text-anchor="start" textLength="10" lengthAdjust="spacingAndGlyphs" >Z</text>
<path d="M950.5,80.5 H967 L960.5,88 V95 H957 V88 Z" fill="none" stroke="#444" stroke-width="1.1"/>
<text x="936.3" y="117.9" font-size="12.5" fill="#262626" font-weight="normal" text-anchor="start" textLength="33.5" lengthAdjust="spacingAndGlyphs" >Sort &amp;</text>
<text x="934.5" y="133.5" font-size="12.5" fill="#262626" font-weight="normal" text-anchor="start" textLength="27" lengthAdjust="spacingAndGlyphs" >Filter</text>
<path d="M963.5,128.0 L966,131.0 L968.5,128.0" stroke="#444" stroke-width="1.1" fill="none"/>
<circle cx="1000.5" cy="83.3" r="10.5" fill="#fff" stroke="#444" stroke-width="1.1"/><line x1="993" y1="90.5" x2="982.5" y2="101" stroke="#444" stroke-width="1.1"/>
<text x="979.4" y="117.9" font-size="12.5" fill="#262626" font-weight="normal" text-anchor="start" textLength="35" lengthAdjust="spacingAndGlyphs" >Find &amp;</text>
<text x="976.3" y="133.5" font-size="12.5" fill="#262626" font-weight="normal" text-anchor="start" textLength="31" lengthAdjust="spacingAndGlyphs" >Select</text>
<path d="M1010.5,128.0 L1013,131.0 L1015.5,128.0" stroke="#444" stroke-width="1.1" fill="none"/>
<rect x="6.5" y="172.5" width="101" height="25" fill="#fff" stroke="#c8c6c4"/>
<text x="13" y="190" font-size="13" fill="#333" font-weight="normal" text-anchor="start" textLength="16" lengthAdjust="spacingAndGlyphs" >A1</text>
<polygon points="94,183 101,183 97.5,187" fill="#777"/>
<rect x="122" y="180.5" width="1.6" height="1.6" fill="#999"/>
<rect x="122" y="185" width="1.6" height="1.6" fill="#999"/>
<rect x="122" y="189.5" width="1.6" height="1.6" fill="#999"/>
<rect x="138.5" y="172.5" width="109" height="25" fill="#fff" stroke="#c8c6c4"/>
<path d="M152,181 L162.5,191 M162.5,181 L152,191" stroke="#bdbdbd" stroke-width="1.3"/>
<path d="M187.5,185.5 L192.5,190.5 L200,181" stroke="#c8c8c8" stroke-width="2.2" fill="none"/>
<text x="223.5" y="190" font-size="14" fill="#555" font-weight="normal" text-anchor="start" font-style="italic" font-family="Liberation Serif">f</text>
<text x="228.8" y="190" font-size="11.5" fill="#555" font-weight="normal" text-anchor="start" font-style="italic" font-family="Liberation Serif">x</text>
<rect x="251.5" y="172.5" width="809" height="25" fill="#fff" stroke="#c8c6c4"/>
<path d="M1048.5,182.5 L1052.3,186.5 L1056,182.5" stroke="#666" stroke-width="1.6" fill="none"/>
<rect x="801.5" y="138.5" width="183" height="467" fill="#000" opacity="0.06"/>
<rect x="800.5" y="137.5" width="182.5" height="466.5" fill="#fff" stroke="#c6c6c6"/>
<text x="815.1" y="156.9" font-size="12" fill="#262626" font-weight="bold" text-anchor="start" textLength="45.7" lengthAdjust="spacingAndGlyphs" >Cell Size</text>
<path d="M818,174.5 V188 M815.5,177 L818,174.5 L820.5,177 M815.5,185.5 L818,188 L820.5,185.5" stroke="#1e88d6" stroke-width="1.1" fill="none"/>
<path d="M822,174.5 H828.5 V187.5 H822" stroke="#333" stroke-width="1" fill="none"/>
<text x="839.4" y="186.1" font-size="12" fill="#262626" font-weight="normal" text-anchor="start" textLength="70.5" lengthAdjust="spacingAndGlyphs" >Row Height...</text>
<line x1="865.5" y1="187.9" x2="874" y2="187.9" stroke="#262626" stroke-width="1"/>
<text x="839.4" y="213.7" font-size="12" fill="#262626" font-weight="normal" text-anchor="start" textLength="103.6" lengthAdjust="spacingAndGlyphs" >AutoFit Row Height</text>
<line x1="839.4" y1="215.5" x2="847" y2="215.5" stroke="#262626" stroke-width="1"/>
<rect x="801" y="227" width="182.5" height="28" rx="4" fill="#d0d0d0" stroke="#000" stroke-width="3"/>
<rect x="815.5" y="233.5" width="13.5" height="8.5" fill="#f6f6f6" stroke="#333" stroke-width="1"/>
<path d="M814.5,245.5 H820 M830,245.5 H824.5 M816.5,243.5 L814.5,245.5 L816.5,247.5 M828,243.5 L830,245.5 L828,247.5" stroke="#1e88d6" stroke-width="1.1" fill="none"/>
<text x="839.4" y="244.8" font-size="12" fill="#262626" font-weight="normal" text-anchor="start" textLength="40.5" lengthAdjust="spacingAndGlyphs" >Width...</text>
<line x1="839.4" y1="246.60000000000002" x2="850" y2="246.60000000000002" stroke="#262626" stroke-width="1"/>
<text x="839.4" y="273.1" font-size="12" fill="#262626" font-weight="normal" text-anchor="start" textLength="118.8" lengthAdjust="spacingAndGlyphs" >AutoFit Column Width</text>
<line x1="871" y1="274.90000000000003" x2="874" y2="274.90000000000003" stroke="#262626" stroke-width="1"/>
<text x="839.4" y="301" font-size="12" fill="#262626" font-weight="normal" text-anchor="start" textLength="81" lengthAdjust="spacingAndGlyphs" >Default Width...</text>
<line x1="839.4" y1="302.8" x2="847" y2="302.8" stroke="#262626" stroke-width="1"/>
<line x1="802.5" y1="312.8" x2="981.5" y2="312.8" stroke="#dcdcdc"/>
<text x="815.1" y="331.1" font-size="12" fill="#262626" font-weight="bold" text-anchor="start" textLength="46.2" lengthAdjust="spacingAndGlyphs" >Visibility</text>
<text x="839.4" y="359.8" font-size="12" fill="#262626" font-weight="normal" text-anchor="start" textLength="78.8" lengthAdjust="spacingAndGlyphs" >Hide &amp; Unhide</text>
<line x1="880" y1="361.6" x2="887.7" y2="361.6" stroke="#262626" stroke-width="1"/>
<path d="M969,350.5 L974.5,354.7 L969,359" stroke="#444" stroke-width="1.1" fill="none"/>
<line x1="802.5" y1="371.6" x2="981.5" y2="371.6" stroke="#dcdcdc"/>
<text x="815.1" y="389.9" font-size="12" fill="#262626" font-weight="bold" text-anchor="start" textLength="91" lengthAdjust="spacingAndGlyphs" >Organize Sheets</text>
<g stroke="#333" stroke-width="1" fill="none"><rect x="814.5" y="406.5" width="15" height="13" fill="#fff"/><line x1="819.5" y1="406" x2="819.5" y2="420"/><line x1="824.5" y1="406" x2="824.5" y2="420"/><line x1="814" y1="410.5" x2="830" y2="410.5"/><line x1="814" y1="415.5" x2="830" y2="415.5"/></g>
<path d="M820,420.5 L828.5,411.5 L831,414 L822.5,422.5 L819.5,423 Z" fill="#fff" stroke="#1e88d6" stroke-width="1.2"/>
<text x="839.4" y="419.1" font-size="12" fill="#262626" font-weight="normal" text-anchor="start" textLength="74.4" lengthAdjust="spacingAndGlyphs" >Rename Sheet</text>
<line x1="839.4" y1="420.90000000000003" x2="846.5" y2="420.90000000000003" stroke="#262626" stroke-width="1"/>
<text x="839.4" y="447.3" font-size="12" fill="#262626" font-weight="normal" text-anchor="start" textLength="115.4" lengthAdjust="spacingAndGlyphs" >Move or Copy Sheet...</text>
<line x1="839.4" y1="449.1" x2="850" y2="449.1" stroke="#262626" stroke-width="1"/>
<text x="839.4" y="475.2" font-size="12" fill="#262626" font-weight="normal" text-anchor="start" textLength="51" lengthAdjust="spacingAndGlyphs" >Tab Color</text>
<line x1="839.4" y1="477.0" x2="845" y2="477.0" stroke="#262626" stroke-width="1"/>
<path d="M969,465.8 L974.5,470.0 L969,474.3" stroke="#444" stroke-width="1.1" fill="none"/>
<line x1="802.5" y1="486.6" x2="981.5" y2="486.6" stroke="#dcdcdc"/>
<text x="815.1" y="504.7" font-size="12" fill="#262626" font-weight="bold" text-anchor="start" textLength="58.5" lengthAdjust="spacingAndGlyphs" >Protection</text>
<g stroke="#333" stroke-width="1" fill="none"><rect x="814.5" y="522.5" width="15" height="13" fill="#fff"/><line x1="819.5" y1="522" x2="819.5" y2="536"/><line x1="824.5" y1="522" x2="824.5" y2="536"/><line x1="814" y1="526.5" x2="830" y2="526.5"/><line x1="814" y1="531.5" x2="830" y2="531.5"/></g>
<rect x="823.5" y="529.5" width="7" height="7" fill="#f29b30"/><path d="M825,529.5 V527.5 A2,2 0 0 1 829,527.5 V529.5" stroke="#f29b30" stroke-width="1.2" fill="#fff"/>
<text x="839.4" y="534" font-size="12" fill="#262626" font-weight="normal" text-anchor="start" textLength="78.4" lengthAdjust="spacingAndGlyphs" >Protect Sheet...</text>
<line x1="839.4" y1="535.8" x2="846.5" y2="535.8" stroke="#262626" stroke-width="1"/>
<rect x="812.5" y="547.5" width="19" height="19" fill="#c8c8c8" stroke="#8a8a8a"/>
<path d="M818,555.5 V552.5 A4,4 0 0 1 826,552.5 V555.5" stroke="#333" stroke-width="1.1" fill="none"/><rect x="816.5" y="555.5" width="11" height="9" fill="#f6f6f6" stroke="#333"/>
<text x="839.4" y="562.1" font-size="12" fill="#262626" font-weight="normal" text-anchor="start" textLength="47.4" lengthAdjust="spacingAndGlyphs" >Lock Cell</text>
<line x1="839.4" y1="563.9" x2="846" y2="563.9" stroke="#262626" stroke-width="1"/>
<line x1="834" y1="573.2" x2="981.5" y2="573.2" stroke="#dcdcdc"/>
<rect x="816.5" y="580.5" width="11.5" height="15" fill="#fff" stroke="#333"/><path d="M819,585 h2 v2 h-2 z M819,589.5 h2 v2 h-2 z M823,586 h2.5 M823,590.5 h2.5" stroke="#555" stroke-width="0.8" fill="none"/>
<text x="839.4" y="592.8" font-size="12" fill="#262626" font-weight="normal" text-anchor="start" textLength="74.2" lengthAdjust="spacingAndGlyphs" >Format Cells...</text>
<line x1="888" y1="594.5999999999999" x2="893.5" y2="594.5999999999999" stroke="#262626" stroke-width="1"/>
<path d="M892.5,253 V269 L896.2,265.5 L898.8,271.3 L901.2,270.3 L898.7,264.6 L903.8,264.6 Z" fill="none" stroke="#111" stroke-width="1" stroke-linejoin="miter"/>
<line x1="249.4" y1="401" x2="176" y2="285.5" stroke="#000" stroke-width="3.3" stroke-linecap="butt"/>
<polygon points="176,285.5 178.3,299.8 188,293" fill="#000"/>
<line x1="566.5" y1="362.3" x2="800" y2="136.5" stroke="#000" stroke-width="3.3" stroke-linecap="butt"/>
<polygon points="800,136.5 788.8,139.8 797,147" fill="#000"/>
<line x1="688.7" y1="515.9" x2="799" y2="262" stroke="#000" stroke-width="3.3" stroke-linecap="butt"/>
<polygon points="799,262 789.3,269.3 799.4,273.2" fill="#000"/>
<polygon points="805.2,131.6 788.8,139.8 797,147" fill="#000"/>
<polygon points="801.3,256.3 789.3,269.3 799.4,273.2" fill="#000"/>
<polygon points="173.8,281.9 178.3,299.8 188,293" fill="#000"/>
<text x="245.8" y="424.9" font-size="27.5" fill="#000" font-weight="bold" text-anchor="start" textLength="230" lengthAdjust="spacingAndGlyphs" >Column selected</text>
<text x="465.6" y="365.9" font-size="27.5" fill="#000" font-weight="bold" text-anchor="start" textLength="100" lengthAdjust="spacingAndGlyphs" >Format</text>
<text x="603.2" y="528.7" font-size="27.5" fill="#000" font-weight="bold" text-anchor="start" textLength="82" lengthAdjust="spacingAndGlyphs" >Width</text>
<rect x="1" y="35" width="1" height="692" fill="#ffffff" opacity="0.7"/>
<rect x="1065" y="35" width="1" height="692" fill="#ffffff" opacity="0.5"/>
<rect x="1" y="726" width="1065" height="1" fill="#ffffff" opacity="0.8"/>
<rect x="0" y="35" width="1" height="693" fill="#217346"/>
<rect x="1066" y="35" width="1" height="693" fill="#217346"/>
<rect x="0" y="727" width="1067" height="1" fill="#217346"/>
</svg>
</body></html>
